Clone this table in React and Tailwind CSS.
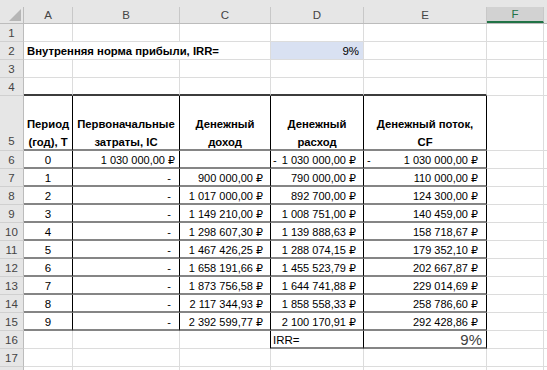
import clsx from 'clsx';

const colW = ["w-[49px]", "w-[107px]", "w-[91px]", "w-[93px]", "w-[123px]", "w-[57px]"];
const letters = ["A", "B", "C", "D", "E", "F"];

const rows = [
  [1, "900 000,00 ₽", "790 000,00 ₽", "110 000,00 ₽"],
  [2, "1 017 000,00 ₽", "892 700,00 ₽", "124 300,00 ₽"],
  [3, "1 149 210,00 ₽", "1 008 751,00 ₽", "140 459,00 ₽"],
  [4, "1 298 607,30 ₽", "1 139 888,63 ₽", "158 718,67 ₽"],
  [5, "1 467 426,25 ₽", "1 288 074,15 ₽", "179 352,10 ₽"],
  [6, "1 658 191,66 ₽", "1 455 523,79 ₽", "202 667,87 ₽"],
  [7, "1 873 756,58 ₽", "1 644 741,88 ₽", "229 014,69 ₽"],
  [8, "2 117 344,93 ₽", "1 858 558,33 ₽", "258 786,60 ₽"],
  [9, "2 392 599,77 ₽", "2 100 170,91 ₽", "292 428,86 ₽"],
];

// обычная ячейка с сеткой
function Cell({ col, className, children }) {
  return (
    <div className={clsx("shrink-0 h-full flex items-center pt-[1px] border-r border-b border-[#dcdcdc] overflow-visible whitespace-nowrap", colW[col], className)}>
      {children}
    </div>
  );
}

function RowHead({ n, className }) {
  return (
    <div className={clsx("shrink-0 w-[24px] h-full flex justify-center pt-[1px] bg-[#e6e6e6] border-r border-r-[#bcbcbc] border-b border-b-[#d0d0d0] text-[#444] text-[11.5px]", className || "items-center")}>
      {n}
    </div>
  );
}

function Filler() {
  return <div className="flex-1 h-full border-b border-[#dcdcdc]" />;
}

// ячейка внутри таблицы (черные вертикали, серые горизонтали)
const tbl = "border-r-black border-b-2 border-b-[#858585]";

export default function App() {
  return (
    <div className="w-[547px] h-[370px] overflow-hidden bg-white text-black font-['Liberation_Sans','DejaVu_Sans',sans-serif] text-[11px] leading-[18px]">
      {/* шапка с буквами столбцов */}
      <div className="h-[7px] bg-[#e6e6e6]" />
      <div className="flex h-[17px] bg-[#e6e6e6] border-b border-[#bcbcbc] text-[11.5px]">
        <div className="relative shrink-0 w-[24px] h-full border-r border-[#bcbcbc]">
          <svg width="12" height="12" className="absolute right-[2px] bottom-[2px]" viewBox="0 0 12 12">
            <polygon points="12,0 12,12 0,12" fill="#b6b6b6" />
          </svg>
        </div>
        {letters.map((l, i) => (
          <div
            key={l}
            className={clsx(
              "shrink-0 h-full flex items-center justify-center border-r border-[#c8c8c8]",
              colW[i],
              l === "F" ? "bg-[#d2d2d2] text-[#217346] border-b-2 border-b-[#217346]" : "text-[#444]"
            )}
          >
            {l}
          </div>
        ))}
        <div className="flex-1" />
      </div>

      {/* 1 */}
      <div className="flex h-[18px]">
        <RowHead n={1} />
        {letters.map((l, i) => <Cell key={l} col={i} />)}
        <Filler />
      </div>

      {/* 2 */}
      <div className="flex h-[18px]">
        <RowHead n={2} />
        <div className="shrink-0 w-[247px] h-full flex items-center pt-[1px] pl-[3px] font-bold text-[11.3px] border-r border-b border-[#dcdcdc] whitespace-nowrap">
          Внутренняя норма прибыли, IRR=
        </div>
        <Cell col={3} className="bg-[#d9e1f2] justify-end pr-[4px] text-[11.5px]">9%</Cell>
        <Cell col={4} />
        <Cell col={5} />
        <Filler />
      </div>

      {/* 3 */}
      <div className="flex h-[18px]">
        <RowHead n={3} />
        {letters.map((l, i) => <Cell key={l} col={i} />)}
        <Filler />
      </div>

      {/* 4 */}
      <div className="flex h-[18px]">
        <RowHead n={4} />
        {letters.map((l, i) => (
          <Cell key={l} col={i} className={i < 5 ? "border-b-2 border-b-[#3c3c3c]" : ""} />
        ))}
        <Filler />
      </div>

      {/* 5: заголовки таблицы */}
      <div className="flex h-[55px]">
        <RowHead n={5} className="items-end" />
        {[
          ["Период", "(год), Т"],
          ["Первоначальные", "затраты, IC"],
          ["Денежный", "доход"],
          ["Денежный", "расход"],
          ["Денежный поток,", "CF"],
        ].map(([a, b], i) => (
          <Cell key={i} col={i} className={clsx(tbl, "flex-col justify-end items-center font-bold text-center text-[11.3px]")}>
            <span className="translate-y-[2px]">{a}</span>
            <span className="translate-y-[2px]">{b}</span>
          </Cell>
        ))}
        <Cell col={5} />
        <Filler />
      </div>

      {/* 6 */}
      <div className="flex h-[18px]">
        <RowHead n={6} />
        <Cell col={0} className={clsx(tbl, "justify-center text-[11.5px]")}>0</Cell>
        <Cell col={1} className={clsx(tbl, "justify-end pr-[4px]")}>1 030 000,00 ₽</Cell>
        <Cell col={2} className={tbl} />
        <Cell col={3} className={clsx(tbl, "justify-between pl-[2px] pr-[7px]")}>
          <span>-</span>
          <span>1 030 000,00 ₽</span>
        </Cell>
        <Cell col={4} className={clsx(tbl, "justify-between pl-[3px] pr-[8px]")}>
          <span>-</span>
          <span>1 030 000,00 ₽</span>
        </Cell>
        <Cell col={5} />
        <Filler />
      </div>

      {/* 7–15 */}
      {rows.map(([t, inc, out, cf], k) => (
        <div key={t} className="flex h-[18px]">
          <RowHead n={7 + k} />
          <Cell col={0} className={clsx(tbl, "justify-center text-[11.5px]")}>{t}</Cell>
          <Cell col={1} className={clsx(tbl, "justify-end pr-[8px]")}>-</Cell>
          <Cell col={2} className={clsx(tbl, "justify-end pr-[7px]")}>{inc}</Cell>
          <Cell col={3} className={clsx(tbl, "justify-end pr-[7px]")}>{out}</Cell>
          <Cell col={4} className={clsx(tbl, "justify-end pr-[8px]")}>{cf}</Cell>
          <Cell col={5} />
          <Filler />
        </div>
      ))}

      {/* 16 */}
      <div className="flex h-[18px]">
        <RowHead n={16} />
        <Cell col={0} />
        <Cell col={1} />
        <Cell col={2} className="border-r-black" />
        <Cell col={3} className={clsx(tbl, "pl-[2px] text-[11.5px]")}>IRR=</Cell>
        <Cell col={4} className={clsx(tbl, "justify-end pr-[4px] text-[15px] text-[#404040]")}>9%</Cell>
        <Cell col={5} />
        <Filler />
      </div>

      {/* 17 */}
      <div className="flex h-[18px]">
        <RowHead n={17} />
        {letters.map((l, i) => <Cell key={l} col={i} />)}
        <Filler />
      </div>

      <div className="flex h-[18px]">
        <RowHead n="" />
        {letters.map((l, i) => <Cell key={l} col={i} />)}
        <Filler />
      </div>
    </div>
  );
}
